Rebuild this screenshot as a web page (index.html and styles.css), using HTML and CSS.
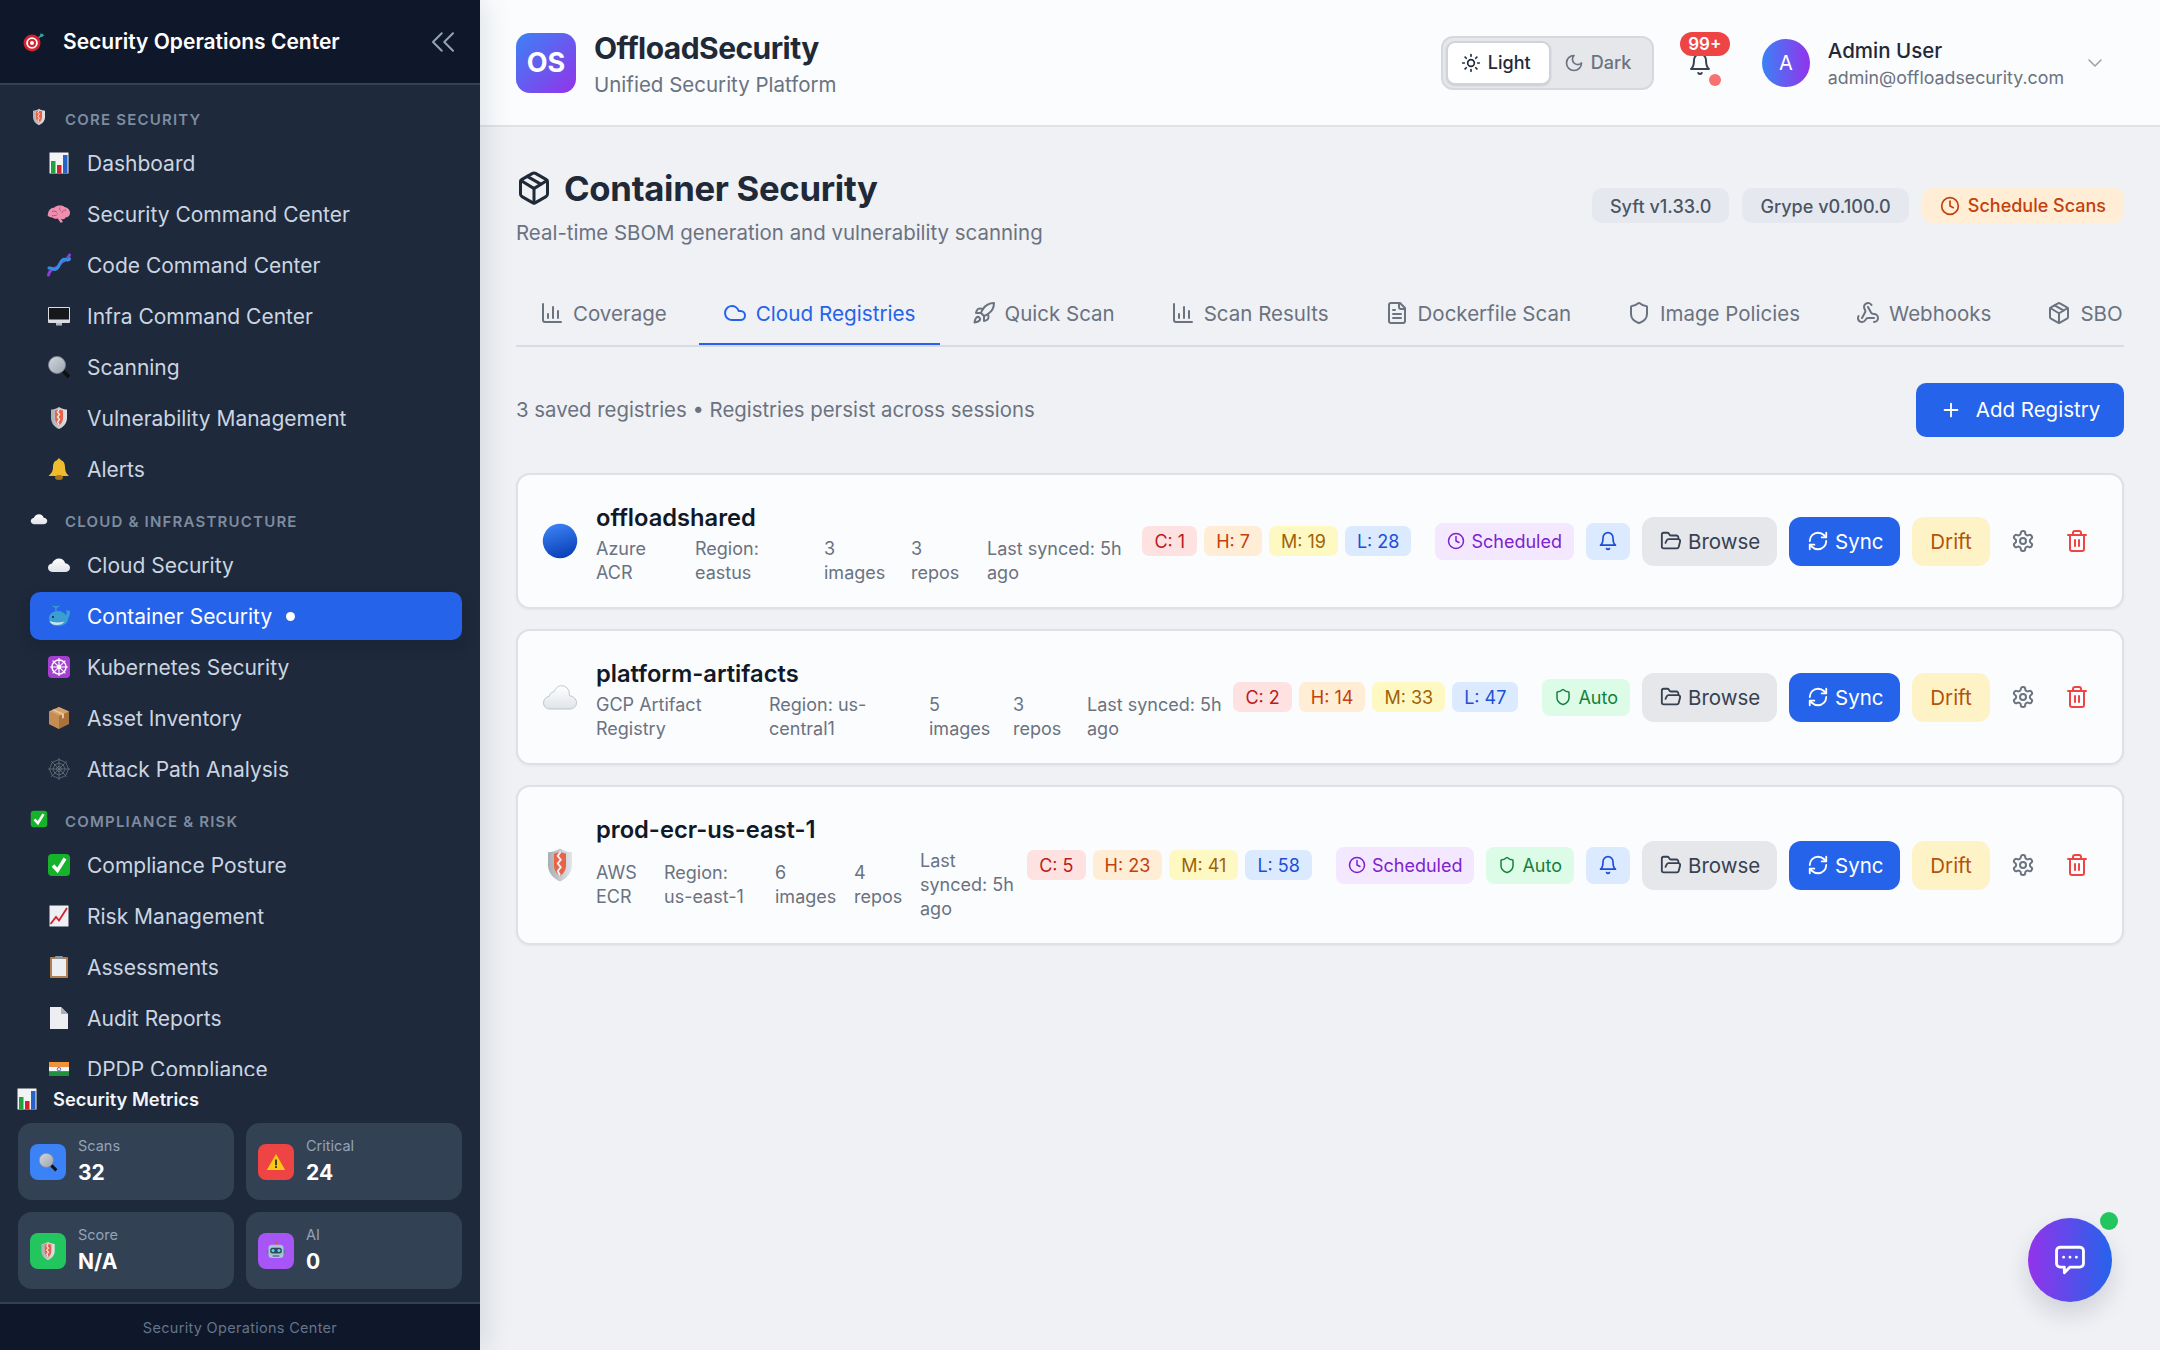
FILE: index.html
```html
<!DOCTYPE html>
<html lang="en">
<head>
<meta charset="utf-8">
<title>Container Security</title>
<link rel="stylesheet" href="styles.css">
</head>
<body>
<svg class="sprite" aria-hidden="true">
<defs>
<linearGradient id="gBlue" x1="0.3" y1="0" x2="0.6" y2="1"><stop offset="0" stop-color="#3b82f6"/><stop offset="1" stop-color="#0a3fb5"/></linearGradient>
<linearGradient id="gCloud" x1="0" y1="0" x2="0" y2="1"><stop offset="0" stop-color="#ffffff"/><stop offset="1" stop-color="#dfe3e8"/></linearGradient>
<linearGradient id="gShield" x1="0" y1="0" x2="1" y2="0"><stop offset="0" stop-color="#a9aeb4"/><stop offset="1" stop-color="#e3e5e8"/></linearGradient>
<linearGradient id="gLens" x1="0" y1="0" x2="1" y2="1"><stop offset="0" stop-color="#d3d8de"/><stop offset="1" stop-color="#9aa3ad"/></linearGradient>
</defs>
<symbol id="e-target" viewBox="0 0 24 24"><path d="M13 11 21 4" stroke="#3aa6a0" stroke-width="1.6" fill="none"/><path d="M19 2.5l.5 2.5 3 .2-2.6 1.8-2.4-.6z" fill="#3aa6a0"/><circle cx="10" cy="13" r="8.5" fill="#d3212d"/><circle cx="10" cy="13" r="5.8" fill="#fff"/><circle cx="10" cy="13" r="4" fill="#d3212d"/><circle cx="10" cy="13" r="2" fill="#fff"/></symbol>
<symbol id="e-shield" viewBox="0 0 24 24"><path d="M12 1c3 2 6 2.500 8 2.500V12c0 5-3.500 9-8 11-4.500-2-8-6-8-11V3.500C6 3.500 9 3 12 1z" fill="url(#gShield)"/><path d="M8 4.500c1.500-.3 3-.9 4-1.500 1.500.8 3 1.200 4 1.400V12c0 3.500-1.800 6-4 7.500-2.200-1.500-4-4-4-7.500z" fill="#e8634a"/><path d="M12.500 3l-2 3 2 2.500-2 2.500 2 2.500-2 2.500 1.500 3" stroke="#f1f2f4" stroke-width="1.300" fill="none"/></symbol>
<symbol id="e-chart" viewBox="0 0 24 24"><rect x="2.500" y="1.500" width="19" height="21" fill="#f1f3f5"/><rect x="4" y="10" width="4.500" height="12.500" fill="#1fa340"/><rect x="10" y="14" width="4.500" height="8.500" fill="#d3212d"/><rect x="16" y="4" width="4.500" height="18.500" fill="#2563c9"/></symbol>
<symbol id="e-brain" viewBox="0 0 24 24"><path d="M1 12.500c0-4 3-7 6.500-7C10 3 15 3 17.500 5c3 .3 5.800 3 5.500 6.500-.3 2.800-2.500 4-4.500 4-.5 1.800-3 2.300-4.500 1.500l2 3-2.500.8-2.800-4.300c-2 .7-4 .3-5-1-2.500 0-5.200-1-5.200-3z" fill="#ef8fb0"/><path d="M5 9.500c2-1 4 0 5 1m3-5c-1 1.500 0 3 1 3.500m5-1c-1.500 0-4 1-4 3M5 13.500c2 .5 4.500 0 5.500-1.500" stroke="#b9527a" stroke-width="1" fill="none"/></symbol>
<symbol id="e-dna" viewBox="0 0 24 24"><path d="M1.500 22C3 14 10 17 12.500 11.500 15 7 20 8.500 22.500 2" stroke="#8a3fd6" stroke-width="3" fill="none" stroke-linecap="round"/><path d="M2 15c3.500-1 5 3.500 8 .5S13 8 16 6.500c2.500-1 5.500 2 6.500-.5" stroke="#2f8fe0" stroke-width="3" fill="none" stroke-linecap="round"/></symbol>
<symbol id="e-monitor" viewBox="0 0 24 24"><rect x="1" y="3" width="22" height="16" rx="1" fill="#d9dce0"/><rect x="2" y="4" width="20" height="11.500" fill="#15171a"/><rect x="9" y="19" width="6" height="2.500" fill="#b4b8bd"/></symbol>
<symbol id="e-mag" viewBox="0 0 24 24"><path d="M14 14l8 8" stroke="#0e1114" stroke-width="3.600"/><circle cx="10" cy="10" r="8.500" fill="url(#gLens)" stroke="#7f8791" stroke-width=".8"/></symbol>
<symbol id="e-bell" viewBox="0 0 24 24"><path d="M12 1.500c1 0 1.500.7 1.500 1.500 3.500 1 4.500 4 4.500 7 0 5 2 7 4 9H1.500c2-2 4.500-4 4.500-9 0-3 1-6 4.500-7 0-.8.5-1.500 1.500-1.500z" fill="#f1bb2e"/><ellipse cx="12" cy="20.500" rx="4" ry="2.500" fill="#a5761a"/></symbol>
<symbol id="e-cloud" viewBox="0 0 24 24"><path d="M6 19c-3 0-5-1.800-5-4.200 0-2.300 1.800-4 4-4.200C6 7.500 9 5.500 12 5.500c3 0 5.500 2 6.200 4.700 2.700.2 4.800 2 4.800 4.500S21 19 18 19z" fill="url(#gCloud)"/></symbol>
<symbol id="e-cloudo" viewBox="0 0 24 24"><path d="M5.500 20C2.800 20 1 18.200 1 15.800c0-2.300 1.800-4 3.800-4.200C5 10 6.300 8.700 8 8.600 9 6 11 4.500 13 4.500c3 0 5.200 2.300 5.200 5.200 0 .5 0 1 .1 1.500 2.700.2 4.700 2.100 4.700 4.600S21 20 18.500 20z" fill="url(#gCloud)" stroke="#b9c0c8" stroke-width=".6"/></symbol>
<symbol id="e-whale" viewBox="0 0 24 24"><path d="M2 14c0-4 4-7 9-7 4 0 6 2 8 4 1-1 1-3 0-5l4 1c0 3-1 6-2 8 0 4-4 7-10 7-6 0-9-3-9-8z" fill="#3a9fd0"/><path d="M2.500 17c3 1.500 10 2 15 .5-1.500 2.500-4.500 3.500-8 3.500-3.500 0-6-1.500-7-4z" fill="#cfe4ee"/><circle cx="6" cy="13" r="1" fill="#123"/><path d="M9 7V4M9 4C8 2 6.500 2 6 3M9 4c1-2 2.500-2 3-1" stroke="#3a9fd0" stroke-width="1.300" fill="none"/></symbol>
<symbol id="e-wheel" viewBox="0 0 24 24"><rect x="1" y="1" width="22" height="22" rx="4" fill="#a63ed1"/><circle cx="12" cy="12" r="7" fill="none" stroke="#fff" stroke-width="1.500"/><circle cx="12" cy="12" r="2.200" fill="#fff"/><path d="M12 3v18M3 12h18M5.600 5.600l12.800 12.800M18.400 5.600 5.600 18.400" stroke="#fff" stroke-width="1.200"/></symbol>
<symbol id="e-box" viewBox="0 0 24 24"><path d="M12 1 22 5.500 22 18 12 23 2 18V5.500z" fill="#a9713c"/><path d="M12 1 22 5.500 12 10 2 5.500z" fill="#d4a06a"/><path d="M12 10v13L2 18V5.500z" fill="#c48d54"/><path d="M7 3.200 17 7.800v4l-2 1V8.700L5 4.100z" fill="#e8c79e"/></symbol>
<symbol id="e-web" viewBox="0 0 24 24"><g fill="none" stroke="#68717d" stroke-width=".8"><path d="M12 1v22M1 12h22M4.200 4.200l15.600 15.600M19.800 4.200 4.200 19.800"/><path d="M12 2.500 18.700 5.300 21.500 12 18.700 18.700 12 21.500 5.300 18.700 2.500 12 5.300 5.300z"/><path d="M12 6 16.200 7.800 18 12 16.200 16.200 12 18 7.800 16.200 6 12 7.800 7.800z"/><path d="M12 9.500 13.800 10.200 14.500 12 13.800 13.800 12 14.500 10.200 13.800 9.500 12 10.200 10.200z"/></g></symbol>
<symbol id="e-check" viewBox="0 0 24 24"><rect x="1" y="1" width="22" height="22" rx="4" fill="#16b22b"/><path d="M6 12.500l4.500 5L18 5.500" fill="none" stroke="#fff" stroke-width="3.400"/></symbol>
<symbol id="e-up" viewBox="0 0 24 24"><rect x="2.500" y="1.500" width="19" height="21" fill="#eef0f3"/><path d="M3.500 20 9 13l3 3.500L20 4" fill="none" stroke="#d3212d" stroke-width="1.800"/></symbol>
<symbol id="e-clip" viewBox="0 0 24 24"><rect x="3" y="2" width="18" height="21" rx="1" fill="#b07f4d"/><rect x="5" y="4" width="14" height="17" fill="#eceef1"/><rect x="8" y="1" width="8" height="3" rx="1" fill="#8c949e"/></symbol>
<symbol id="e-page" viewBox="0 0 24 24"><path d="M3 1h11l7 7v15H3z" fill="#eceef1"/><path d="M14 1l7 7h-7z" fill="#aab0b7"/></symbol>
<symbol id="e-flag" viewBox="0 0 24 24"><rect x="2" y="5" width="20" height="5" fill="#f0923b"/><rect x="2" y="10" width="20" height="4.500" fill="#f4f5f6"/><rect x="2" y="14.500" width="20" height="5" fill="#22913c"/><circle cx="12" cy="12.200" r="1.700" fill="none" stroke="#2b3a8c" stroke-width=".7"/></symbol>
<symbol id="e-warn" viewBox="0 0 24 24"><path d="M12 2.500 23 21.500H1z" fill="#fbc915"/><rect x="11" y="9" width="2" height="7" fill="#222"/><rect x="11" y="17" width="2" height="2.200" fill="#222"/></symbol>
<symbol id="e-robot" viewBox="0 0 24 24"><rect x="11.200" y="1" width="1.600" height="4" fill="#c7583e"/><circle cx="12" cy="2" r="1.500" fill="#d9573a"/><rect x="1" y="10" width="3" height="6" rx="1.500" fill="#5a7f98"/><rect x="20" y="10" width="3" height="6" rx="1.500" fill="#5a7f98"/><rect x="3" y="4.500" width="18" height="16" rx="4" fill="#a9c3d4"/><rect x="5" y="8" width="14" height="7" rx="3" fill="#2e4a5e"/><circle cx="8.500" cy="11.500" r="1.800" fill="#56d4e8"/><circle cx="15.500" cy="11.500" r="1.800" fill="#56d4e8"/><rect x="8" y="17" width="8" height="2" fill="#5a7f98"/></symbol>
<symbol id="e-blue" viewBox="0 0 24 24"><circle cx="12" cy="12" r="11.500" fill="url(#gBlue)"/></symbol>

<symbol id="i-chart" viewBox="0 0 24 24"><path d="M3 3v16a2 2 0 0 0 2 2h16"/><path d="M8 17v-4"/><path d="M13 17V6"/><path d="M18 17v-7"/></symbol>
<symbol id="i-cloud" viewBox="0 0 24 24"><path d="M17.500 19H9a7 7 0 1 1 6.710-9h1.790a4.500 4.500 0 1 1 0 9Z"/></symbol>
<symbol id="i-rocket" viewBox="0 0 24 24"><path d="M4.500 16.500c-1.500 1.260-2 5-2 5s3.740-.5 5-2c.71-.84.7-2.130-.09-2.910a2.180 2.180 0 0 0-2.910-.09z"/><path d="m12 15-3-3a22 22 0 0 1 2-3.950A12.880 12.880 0 0 1 22 2c0 2.720-.78 7.500-6 11a22.350 22.350 0 0 1-4 2z"/><path d="M9 12H4s.55-3.030 2-4c1.620-1.080 5 0 5 0"/><path d="M12 15v5s3.030-.55 4-2c1.080-1.620 0-5 0-5"/></symbol>
<symbol id="i-file" viewBox="0 0 24 24"><path d="M15 2H6a2 2 0 0 0-2 2v16a2 2 0 0 0 2 2h12a2 2 0 0 0 2-2V7Z"/><path d="M14 2v4a2 2 0 0 0 2 2h4"/><path d="M10 9H8"/><path d="M16 13H8"/><path d="M16 17H8"/></symbol>
<symbol id="i-shield" viewBox="0 0 24 24"><path d="M20 13c0 5-3.500 7.500-7.660 8.950a1 1 0 0 1-.67-.01C7.500 20.500 4 18 4 13V6a1 1 0 0 1 1-1c2 0 4.500-1.200 6.240-2.720a1.170 1.170 0 0 1 1.520 0C14.510 3.810 17 5 19 5a1 1 0 0 1 1 1z"/></symbol>
<symbol id="i-webhook" viewBox="0 0 24 24"><path d="M18 16.980h-5.990c-1.100 0-1.950.94-2.480 1.900A4 4 0 0 1 2 17c.01-.7.2-1.400.57-2"/><path d="m6 17 3.130-5.780c.53-.97.1-2.180-.5-3.100a4 4 0 1 1 6.890-4.060"/><path d="m12 6 3.130 5.730C15.660 12.700 16.900 13 18 13a4 4 0 0 1 0 8"/></symbol>
<symbol id="i-package" viewBox="0 0 24 24"><path d="M11 21.730a2 2 0 0 0 2 0l7-4A2 2 0 0 0 21 16V8a2 2 0 0 0-1-1.730l-7-4a2 2 0 0 0-2 0l-7 4A2 2 0 0 0 3 8v8a2 2 0 0 0 1 1.730z"/><path d="M12 22V12"/><path d="m3.300 7 7.703 4.734a2 2 0 0 0 1.994 0L20.700 7"/><path d="m7.500 4.270 9 5.150"/></symbol>
<symbol id="i-sun" viewBox="0 0 24 24"><circle cx="12" cy="12" r="4"/><path d="M12 2v2M12 20v2M4.930 4.930l1.410 1.410M17.660 17.660l1.410 1.410M2 12h2M20 12h2M6.340 17.660l-1.410 1.410M19.070 4.930l-1.410 1.410"/></symbol>
<symbol id="i-moon" viewBox="0 0 24 24"><path d="M12 3a6 6 0 0 0 9 9 9 9 0 1 1-9-9Z"/></symbol>
<symbol id="i-bell" viewBox="0 0 24 24"><path d="M6 8a6 6 0 0 1 12 0c0 7 3 9 3 9H3s3-2 3-9"/><path d="M10.300 21a1.940 1.940 0 0 0 3.400 0"/></symbol>
<symbol id="i-down" viewBox="0 0 24 24"><path d="m6 9 6 6 6-6"/></symbol>
<symbol id="i-left2" viewBox="0 0 24 24"><path d="m11 19-7-7 7-7"/><path d="m20 19-7-7 7-7"/></symbol>
<symbol id="i-clock" viewBox="0 0 24 24"><circle cx="12" cy="12" r="10"/><path d="M12 6v6l4 2"/></symbol>
<symbol id="i-plus" viewBox="0 0 24 24"><path d="M5 12h14"/><path d="M12 5v14"/></symbol>
<symbol id="i-folder" viewBox="0 0 24 24"><path d="m6 14 1.500-2.900A2 2 0 0 1 9.240 10H20a2 2 0 0 1 1.940 2.500l-1.540 6a2 2 0 0 1-1.950 1.500H4a2 2 0 0 1-2-2V5a2 2 0 0 1 2-2h3.900a2 2 0 0 1 1.690.9l.81 1.200a2 2 0 0 0 1.670.9H18a2 2 0 0 1 2 2v2"/></symbol>
<symbol id="i-sync" viewBox="0 0 24 24"><path d="M3 12a9 9 0 0 1 9-9 9.750 9.750 0 0 1 6.740 2.740L21 8"/><path d="M21 3v5h-5"/><path d="M21 12a9 9 0 0 1-9 9 9.750 9.750 0 0 1-6.740-2.740L3 16"/><path d="M8 16H3v5"/></symbol>
<symbol id="i-gear" viewBox="0 0 24 24"><path d="M12.220 2h-.44a2 2 0 0 0-2 2v.18a2 2 0 0 1-1 1.730l-.43.25a2 2 0 0 1-2 0l-.15-.08a2 2 0 0 0-2.730.73l-.22.38a2 2 0 0 0 .73 2.730l.15.1a2 2 0 0 1 1 1.720v.51a2 2 0 0 1-1 1.740l-.15.09a2 2 0 0 0-.73 2.730l.22.38a2 2 0 0 0 2.730.73l.15-.08a2 2 0 0 1 2 0l.43.25a2 2 0 0 1 1 1.730V20a2 2 0 0 0 2 2h.44a2 2 0 0 0 2-2v-.18a2 2 0 0 1 1-1.730l.43-.25a2 2 0 0 1 2 0l.15.08a2 2 0 0 0 2.730-.73l.22-.39a2 2 0 0 0-.73-2.730l-.15-.08a2 2 0 0 1-1-1.740v-.5a2 2 0 0 1 1-1.740l.15-.09a2 2 0 0 0 .73-2.730l-.22-.38a2 2 0 0 0-2.730-.73l-.15.08a2 2 0 0 1-2 0l-.43-.25a2 2 0 0 1-1-1.730V4a2 2 0 0 0-2-2z"/><circle cx="12" cy="12" r="3"/></symbol>
<symbol id="i-trash" viewBox="0 0 24 24"><path d="M3 6h18"/><path d="M19 6v14c0 1-1 2-2 2H7c-1 0-2-1-2-2V6"/><path d="M8 6V4c0-1 1-2 2-2h4c1 0 2 1 2 2v2"/><path d="M10 11v6"/><path d="M14 11v6"/></symbol>
<symbol id="i-chat" viewBox="0 0 24 24"><path d="M5 3h14a2.500 2.500 0 0 1 2.500 2.500v9A2.500 2.500 0 0 1 19 17h-7l-4 4v-4H5a2.500 2.500 0 0 1-2.500-2.500v-9A2.500 2.500 0 0 1 5 3z"/><path d="M7.500 10h.01M12 10h.01M16.500 10h.01"/></symbol>
</svg>

<div class="app">
  <aside class="sidebar">
    <div class="side-head">
      <svg class="emoji e-head"><use href="#e-target"/></svg>
      <span class="side-title">Security Operations Center</span>
      <svg class="icon collapse"><use href="#i-left2"/></svg>
    </div>
    <nav class="nav">
      <div class="nav-section">
        <div class="nav-heading"><svg class="emoji e-sec"><use href="#e-shield"/></svg><span>CORE SECURITY</span></div>
        <a class="nav-item"><svg class="emoji"><use href="#e-chart"/></svg>Dashboard</a>
        <a class="nav-item"><svg class="emoji"><use href="#e-brain"/></svg>Security Command Center</a>
        <a class="nav-item"><svg class="emoji"><use href="#e-dna"/></svg>Code Command Center</a>
        <a class="nav-item"><svg class="emoji"><use href="#e-monitor"/></svg>Infra Command Center</a>
        <a class="nav-item"><svg class="emoji"><use href="#e-mag"/></svg>Scanning</a>
        <a class="nav-item"><svg class="emoji"><use href="#e-shield"/></svg>Vulnerability Management</a>
        <a class="nav-item"><svg class="emoji"><use href="#e-bell"/></svg>Alerts</a>
      </div>
      <div class="nav-section">
        <div class="nav-heading"><svg class="emoji e-sec"><use href="#e-cloud"/></svg><span>CLOUD &amp; INFRASTRUCTURE</span></div>
        <a class="nav-item"><svg class="emoji"><use href="#e-cloud"/></svg>Cloud Security</a>
        <a class="nav-item active"><svg class="emoji"><use href="#e-whale"/></svg>Container Security<span class="active-dot"></span></a>
        <a class="nav-item"><svg class="emoji"><use href="#e-wheel"/></svg>Kubernetes Security</a>
        <a class="nav-item"><svg class="emoji"><use href="#e-box"/></svg>Asset Inventory</a>
        <a class="nav-item"><svg class="emoji"><use href="#e-web"/></svg>Attack Path Analysis</a>
      </div>
      <div class="nav-section">
        <div class="nav-heading"><svg class="emoji e-sec"><use href="#e-check"/></svg><span>COMPLIANCE &amp; RISK</span></div>
        <a class="nav-item"><svg class="emoji"><use href="#e-check"/></svg>Compliance Posture</a>
        <a class="nav-item"><svg class="emoji"><use href="#e-up"/></svg>Risk Management</a>
        <a class="nav-item"><svg class="emoji"><use href="#e-clip"/></svg>Assessments</a>
        <a class="nav-item"><svg class="emoji"><use href="#e-page"/></svg>Audit Reports</a>
        <a class="nav-item"><svg class="emoji"><use href="#e-flag"/></svg>DPDP Compliance</a>
      </div>
    </nav>
    <section class="metrics">
      <div class="metrics-title"><svg class="emoji e-met"><use href="#e-chart"/></svg>Security Metrics</div>
      <div class="metrics-grid">
        <div class="metric"><span class="metric-icon bg-blue"><svg class="emoji e-mi"><use href="#e-mag"/></svg></span><div><div class="metric-label">Scans</div><div class="metric-value">32</div></div></div>
        <div class="metric"><span class="metric-icon bg-red"><svg class="emoji e-mi"><use href="#e-warn"/></svg></span><div><div class="metric-label">Critical</div><div class="metric-value">24</div></div></div>
        <div class="metric"><span class="metric-icon bg-green"><svg class="emoji e-mi"><use href="#e-shield"/></svg></span><div><div class="metric-label">Score</div><div class="metric-value">N/A</div></div></div>
        <div class="metric"><span class="metric-icon bg-purple"><svg class="emoji e-mi"><use href="#e-robot"/></svg></span><div><div class="metric-label">AI</div><div class="metric-value">0</div></div></div>
      </div>
    </section>
    <div class="side-foot">Security Operations Center</div>
  </aside>

  <div class="main">
    <header class="topbar">
      <div class="logo">OS</div>
      <div class="brand">
        <div class="brand-name">OffloadSecurity</div>
        <div class="brand-sub">Unified Security Platform</div>
      </div>
      <div class="theme">
        <span class="theme-btn on"><svg class="icon i20"><use href="#i-sun"/></svg>Light</span>
        <span class="theme-btn"><svg class="icon i20"><use href="#i-moon"/></svg>Dark</span>
      </div>
      <div class="notif">
        <svg class="icon i24"><use href="#i-bell"/></svg>
        <span class="notif-count">99+</span>
        <span class="notif-dot"></span>
      </div>
      <div class="avatar">A</div>
      <div class="user">
        <div class="user-name">Admin User</div>
        <div class="user-mail">admin@offloadsecurity.com</div>
      </div>
      <svg class="icon user-caret"><use href="#i-down"/></svg>
    </header>

    <main class="content">
      <div class="page-head">
        <div>
          <h1 class="page-title"><svg class="icon i-page"><use href="#i-package"/></svg>Container Security</h1>
          <p class="page-sub">Real-time SBOM generation and vulnerability scanning</p>
        </div>
        <div class="chips">
          <span class="chip">Syft v1.33.0</span>
          <span class="chip">Grype v0.100.0</span>
          <span class="chip chip-orange"><svg class="icon i20"><use href="#i-clock"/></svg>Schedule Scans</span>
        </div>
      </div>

      <div class="tabs">
        <a class="tab"><svg class="icon i24"><use href="#i-chart"/></svg>Coverage</a>
        <a class="tab active"><svg class="icon i24"><use href="#i-cloud"/></svg>Cloud Registries</a>
        <a class="tab"><svg class="icon i24"><use href="#i-rocket"/></svg>Quick Scan</a>
        <a class="tab"><svg class="icon i24"><use href="#i-chart"/></svg>Scan Results</a>
        <a class="tab"><svg class="icon i24"><use href="#i-file"/></svg>Dockerfile Scan</a>
        <a class="tab"><svg class="icon i24"><use href="#i-shield"/></svg>Image Policies</a>
        <a class="tab"><svg class="icon i24"><use href="#i-webhook"/></svg>Webhooks</a>
        <a class="tab"><svg class="icon i24"><use href="#i-package"/></svg>SBOM</a>
      </div>

      <div class="toolbar">
        <span class="toolbar-text">3 saved registries • Registries persist across sessions</span>
        <button class="add-btn"><svg class="icon i22"><use href="#i-plus"/></svg>Add Registry</button>
      </div>

      <div class="cards">
        <article class="card">
          <svg class="emoji reg-icon"><use href="#e-blue"/></svg>
          <div class="info">
            <div class="reg-name">offloadshared</div>
            <div class="meta meta-a"><span>Azure ACR</span><span>Region: eastus</span><span>3 images</span><span>3 repos</span><span>Last synced: 5h ago</span></div>
          </div>
          <div class="sev"><span class="s s-c">C: 1</span><span class="s s-h">H: 7</span><span class="s s-m">M: 19</span><span class="s s-l">L: 28</span></div>
          <div class="flags"><span class="flag f-sched"><svg class="icon i18"><use href="#i-clock"/></svg>Scheduled</span><span class="flag f-bell"><svg class="icon i20"><use href="#i-bell"/></svg></span></div>
          <div class="actions">
            <button class="btn b-browse"><svg class="icon i22"><use href="#i-folder"/></svg>Browse</button>
            <button class="btn b-sync"><svg class="icon i22"><use href="#i-sync"/></svg>Sync</button>
            <button class="btn b-drift">Drift</button>
            <button class="btn-i b-gear"><svg class="icon i24"><use href="#i-gear"/></svg></button>
            <button class="btn-i b-trash"><svg class="icon i24"><use href="#i-trash"/></svg></button>
          </div>
        </article>
        <article class="card">
          <svg class="emoji reg-icon"><use href="#e-cloudo"/></svg>
          <div class="info">
            <div class="reg-name">platform-artifacts</div>
            <div class="meta meta-b"><span>GCP Artifact Registry</span><span>Region: us-central1</span><span>5 images</span><span>3 repos</span><span>Last synced: 5h ago</span></div>
          </div>
          <div class="sev"><span class="s s-c">C: 2</span><span class="s s-h">H: 14</span><span class="s s-m">M: 33</span><span class="s s-l">L: 47</span></div>
          <div class="flags"><span class="flag f-auto"><svg class="icon i18"><use href="#i-shield"/></svg>Auto</span></div>
          <div class="actions">
            <button class="btn b-browse"><svg class="icon i22"><use href="#i-folder"/></svg>Browse</button>
            <button class="btn b-sync"><svg class="icon i22"><use href="#i-sync"/></svg>Sync</button>
            <button class="btn b-drift">Drift</button>
            <button class="btn-i b-gear"><svg class="icon i24"><use href="#i-gear"/></svg></button>
            <button class="btn-i b-trash"><svg class="icon i24"><use href="#i-trash"/></svg></button>
          </div>
        </article>
        <article class="card">
          <svg class="emoji reg-icon"><use href="#e-shield"/></svg>
          <div class="info">
            <div class="reg-name">prod-ecr-us-east-1</div>
            <div class="meta meta-c"><span>AWS ECR</span><span>Region: us-east-1</span><span>6 images</span><span>4 repos</span><span>Last synced: 5h ago</span></div>
          </div>
          <div class="sev"><span class="s s-c">C: 5</span><span class="s s-h">H: 23</span><span class="s s-m">M: 41</span><span class="s s-l">L: 58</span></div>
          <div class="flags"><span class="flag f-sched"><svg class="icon i18"><use href="#i-clock"/></svg>Scheduled</span><span class="flag f-auto"><svg class="icon i18"><use href="#i-shield"/></svg>Auto</span><span class="flag f-bell"><svg class="icon i20"><use href="#i-bell"/></svg></span></div>
          <div class="actions">
            <button class="btn b-browse"><svg class="icon i22"><use href="#i-folder"/></svg>Browse</button>
            <button class="btn b-sync"><svg class="icon i22"><use href="#i-sync"/></svg>Sync</button>
            <button class="btn b-drift">Drift</button>
            <button class="btn-i b-gear"><svg class="icon i24"><use href="#i-gear"/></svg></button>
            <button class="btn-i b-trash"><svg class="icon i24"><use href="#i-trash"/></svg></button>
          </div>
        </article>
      </div>
    </main>
    <button class="fab"><svg class="icon i-chat"><use href="#i-chat"/></svg><span class="fab-dot"></span></button>
  </div>
</div>
</body>
</html>
```

FILE: styles.css
```css
* { box-sizing: border-box; }
html, body { margin: 0; height: 100%; }
body { font-family: Inter, "Noto Sans", sans-serif; overflow: hidden; background: #eff1f5; color: #1f2937; }
.sprite { position: absolute; width: 0; height: 0; }
.app { display: flex; height: 100vh; }

.icon { width: 22px; height: 22px; fill: none; stroke: currentColor; stroke-width: 2; stroke-linecap: round; stroke-linejoin: round; flex: none; }
.i18 { width: 18px; height: 18px; }
.i20 { width: 20px; height: 20px; }
.i22 { width: 22px; height: 22px; }
.i24 { width: 24px; height: 24px; }
.emoji { width: 24px; height: 24px; flex: none; }

/* Sidebar */
.sidebar { width: 480px; flex: none; display: flex; flex-direction: column; background: #1e293b; box-shadow: 4px 0 28px rgba(15, 23, 42, .12); position: relative; z-index: 2; }
.side-head { height: 85px; flex: none; display: flex; align-items: center; padding: 0 22px 0 22px; background: #0f172a; border-bottom: 2px solid #334155; }
.e-head { width: 24px; height: 24px; margin-right: 17px; }
.side-title { flex: 1; font-size: 21px; font-weight: 600; color: #fff; }
.collapse { width: 30px; height: 30px; color: #94a3b8; stroke-width: 1.600; }
.nav { flex: 1; min-height: 0; overflow: hidden; padding: 18px 18px 0 30px; }
.nav-section + .nav-section { margin-top: 12px; }
.nav-heading { height: 32px; margin-bottom: 4px; display: flex; align-items: center; gap: 17px; font-size: 15px; font-weight: 600; letter-spacing: 1.200px; color: #7e8ca0; }
.e-sec { width: 18px; height: 18px; margin-top: -4px; }
.nav-item { height: 48px; margin-bottom: 3px; padding-left: 17px; display: flex; align-items: center; gap: 16px; border-radius: 10px; font-size: 21px; color: #cbd5e1; }
.nav-item.active { background: #2563eb; color: #fff; box-shadow: 0 6px 14px rgba(15, 23, 42, .25); }
.active-dot { width: 9px; height: 9px; border-radius: 50%; background: #fff; margin-left: -2px; }
.metrics { flex: none; height: 226px; padding: 13px 18px 0; }
.metrics-title { display: flex; align-items: center; gap: 14px; height: 20px; font-size: 18.300px; font-weight: 600; color: #f1f5f9; }
.e-met { margin-left: -3px; }
.metrics-grid { display: grid; grid-template-columns: 216px 216px; gap: 12px; margin-top: 14px; }
.metric { height: 77px; display: flex; align-items: center; gap: 12px; padding-left: 12px; background: #334155; border-radius: 14px; }
.metric-icon { width: 36px; height: 36px; border-radius: 8px; display: flex; align-items: center; justify-content: center; }
.e-mi { width: 20px; height: 20px; }
.bg-blue { background: #3b82f6; }
.bg-red { background: #ef4444; }
.bg-green { background: #22c55e; }
.bg-purple { background: #a855f7; }
.metric-label { font-size: 14.500px; line-height: 18px; color: #94a3b8; }
.metric-value { font-size: 21px; line-height: 28px; margin-top: 4px; font-weight: 700; color: #fff; }
.side-foot { height: 48px; flex: none; display: flex; align-items: center; justify-content: center; background: #0f172a; border-top: 2px solid #334155; font-size: 14.500px; letter-spacing: .3px; color: #64748b; }

/* Main */
.main { flex: 1; min-width: 0; position: relative; display: flex; flex-direction: column; }
.topbar { height: 127px; flex: none; display: flex; align-items: center; padding: 0 53px 0 36px; background: #fafcfe; border-bottom: 2px solid #dfe3e8; }
.logo { width: 60px; height: 60px; border-radius: 14px; background: linear-gradient(135deg, #3b82f6, #9333ea); color: #fff; font-size: 27px; font-weight: 700; display: flex; align-items: center; justify-content: center; margin-right: 18px; }
.brand { flex: 1; padding-top: 3px; }
.brand-name { font-size: 30px; line-height: 38px; font-weight: 700; letter-spacing: -.55px; color: #1f2937; }
.brand-sub { font-size: 20.500px; line-height: 30px; margin-top: 3px; color: #6b7280; }
.theme { width: 213px; height: 54px; display: flex; align-items: center; gap: 4px; padding: 3px; background: #e5e7eb; border: 2px solid #d5d9df; border-radius: 12px; margin-right: 15px; }
.theme-btn { height: 44px; padding: 0 9px; display: flex; align-items: center; gap: 7px; font-size: 18px; font-weight: 500; color: #6b7280; border-radius: 9px; }
.theme-btn.on { width: 105px; padding: 0 13px; gap: 7px; background: #fff; color: #1f2937; border: 2px solid #cfd4da; box-shadow: 0 1px 2px rgba(0, 0, 0, .12); }
.notif { width: 62px; height: 94px; position: relative; display: flex; align-items: center; justify-content: center; margin-right: 31px; color: #374151; }
.notif .icon { margin-top: 2px; }
.notif-count { position: absolute; left: 11px; top: 16px; width: 50px; height: 24px; border-radius: 12px; background: #ef4444; color: #fff; font-size: 17px; font-weight: 600; text-align: center; line-height: 24px; }
.notif-dot { position: absolute; left: 40px; top: 58px; width: 12px; height: 12px; border-radius: 50%; background: #f87171; }
.avatar { width: 48px; height: 48px; border-radius: 50%; background: linear-gradient(90deg, #3b82f6, #9333ea); color: #fff; font-size: 20px; font-weight: 400; display: flex; align-items: center; justify-content: center; margin-right: 18px; }
.user { flex: none; margin-right: 19px; padding-top: 3px; }
.user-name { font-size: 20.500px; line-height: 28px; font-weight: 500; color: #1f2937; }
.user-mail { font-size: 17.800px; line-height: 26px; color: #6b7280; }
.user-caret { width: 24px; height: 24px; color: #9ca3af; stroke-width: 1.600; }

.content { flex: 1; min-height: 0; padding: 39px 36px 0; display: flex; flex-direction: column; }
.page-head { display: flex; justify-content: space-between; align-items: flex-start; }
.page-title { margin: 0; display: flex; align-items: center; gap: 12px; font-size: 34.700px; line-height: 44px; font-weight: 700; letter-spacing: -.3px; color: #1f2937; }
.i-page { width: 36px; height: 36px; }
.page-sub { margin: 9px 0 0; font-size: 20.450px; line-height: 28px; color: #6b7280; }
.chips { display: flex; gap: 13px; margin-top: 22px; }
.chip { height: 35px; padding: 0 18px; display: flex; align-items: center; gap: 8px; font-size: 18.100px; font-weight: 500; color: #4b5563; background: #e5e9ef; border-radius: 10px; }
.chip-orange { padding: 0 18px; font-size: 18px; background: #ffedd5; color: #c2410c; }

.tabs { height: 58px; margin-top: 42px; display: flex; gap: 8px; overflow: hidden; border-bottom: 2px solid #d8dce2; }
.tab { flex: none; height: 56px; padding: 0 24px 6px; display: flex; align-items: center; gap: 9px; font-size: 20.500px; color: #6b7280; border-bottom: 2px solid transparent; }
.tab.active { font-size: 20.700px; color: #2563eb; border-bottom-color: #2563eb; }
.toolbar { height: 54px; margin-top: 36px; display: flex; align-items: center; justify-content: space-between; }
.toolbar-text { font-size: 20.350px; padding-bottom: 2px; color: #6b7280; }
.add-btn { height: 54px; width: 208px; padding: 0 0 1px; display: flex; align-items: center; justify-content: center; gap: 14px; font: 400 20.500px Inter, sans-serif; color: #fff; background: #2563eb; border: 0; border-radius: 10px; }

.cards { margin-top: 36px; display: flex; flex-direction: column; gap: 20px; }
.card { display: flex; align-items: center; padding: 24px 24px; background: #fafcfe; border: 2px solid #dde1e6; border-radius: 14px; box-shadow: 0 1px 3px rgba(15, 23, 42, .05); }
.reg-icon { width: 36px; height: 36px; margin-right: 18px; }
.info { flex: 1; min-width: 0; margin-top: 3px; margin-bottom: -2px; }
.reg-name { font-size: 23.700px; line-height: 32px; font-weight: 600; color: #111827; margin-bottom: 3px; }
.meta { display: grid; align-items: center; column-gap: 24px; font-size: 18px; line-height: 24px; color: #6b7280; }
.meta-a { grid-template-columns: 75px 105px 63px 52px 140px; }
.meta-b { grid-template-columns: 149px 136px 60px 50px 140px; }
.meta-c { grid-template-columns: 44px 87px 55px 42px 96px; }
.sev { display: flex; gap: 7px; margin-left: 10px; }
.s { height: 30px; padding: 0 12px; display: flex; align-items: center; font-size: 18px; border-radius: 7px; }
.s-c { background: #fee2e2; color: #b91c1c; }
.s-h { background: #ffedd5; color: #c2410c; }
.s-m { background: #fef9c3; color: #a16207; }
.s-l { background: #dbeafe; color: #1d4ed8; }
.flags { display: flex; gap: 12px; margin-left: 24px; }
.flag { height: 37px; padding: 0 12px; display: flex; align-items: center; gap: 6px; font-size: 18px; border-radius: 8px; }
.f-sched { background: #f3e8ff; color: #7e22ce; }
.f-auto { background: #dcfce7; color: #15803d; }
.f-bell { background: #dbeafe; color: #1d4ed8; width: 44px; padding: 0; justify-content: center; }
.actions { display: flex; align-items: center; gap: 12px; margin-left: 12px; }
.btn { height: 49px; padding: 0 18px; display: flex; align-items: center; gap: 6px; font: 400 20.500px Inter, sans-serif; border: 0; border-radius: 12px; }
.b-browse { background: #e5e7eb; color: #374151; width: 135px; }
.b-sync { background: #2563eb; color: #fff; width: 111px; }
.b-drift { background: #fef3c7; color: #b45309; width: 78px; justify-content: center; }
.btn-i { width: 42px; height: 42px; padding: 0; display: flex; align-items: center; justify-content: center; background: none; border: 0; }
.b-gear { color: #6b7280; }
.b-trash { color: #ef4444; }

.fab { position: absolute; right: 48px; bottom: 48px; width: 84px; height: 84px; border: 0; border-radius: 50%; background: linear-gradient(90deg, #9333ea, #2563eb); color: #fff; display: flex; align-items: center; justify-content: center; box-shadow: 0 12px 24px rgba(15, 23, 42, .14); }
.i-chat { width: 34px; height: 34px; }
.fab-dot { position: absolute; top: -6px; right: -6px; width: 18px; height: 18px; border-radius: 50%; background: #22c55e; }
```
